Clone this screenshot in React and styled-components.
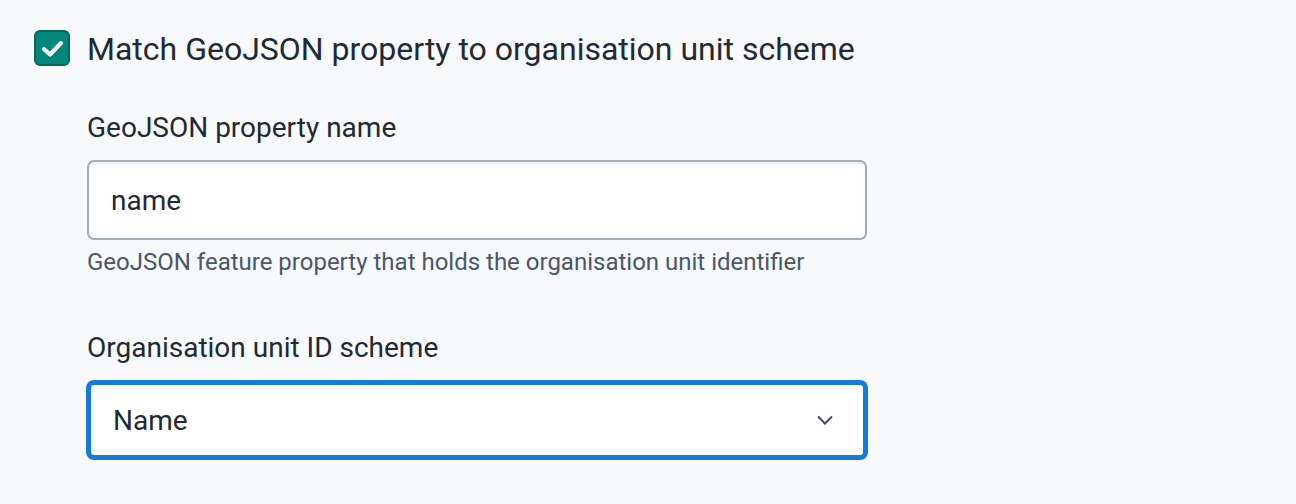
import React from "react";
import styled, { createGlobalStyle } from "styled-components";

const Global = createGlobalStyle`
  html, body {
    margin: 0;
    padding: 0;
    background: #f8f9fb;
  }
  body {
    font-family: Roboto, "Liberation Sans", Arial, sans-serif;
    color: #212934;
  }
`;

const Page = styled.div`
  padding: 30px 0 0 34px;
  width: 1296px;
  height: 504px;
  box-sizing: border-box;
`;

const CheckRow = styled.label`
  display: flex;
  align-items: center;
  gap: 17px;
  height: 36px;
`;

const Box = styled.span`
  width: 36px;
  height: 36px;
  box-sizing: border-box;
  border-radius: 6px;
  border: 2px solid #00695c;
  background: #00897b;
  display: flex;
  align-items: center;
  justify-content: center;
  flex: none;
`;

const CheckText = styled.span`
  font-size: 32px;
  line-height: 38px;
  color: #212934;
  padding-top: 1px;
`;

const Fields = styled.div`
  margin-left: 53px;
  display: flex;
  flex-direction: column;
`;

const Field = styled.div`
  display: flex;
  flex-direction: column;
  margin-top: ${(p) => p.$top}px;
`;

const Label = styled.div`
  font-size: 28px;
  line-height: 36px;
  color: #212934;
  margin-bottom: 14px;
`;

const Input = styled.div`
  width: 780px;
  height: 80px;
  box-sizing: border-box;
  border: 2px solid #a0adba;
  border-radius: 7px;
  background: #ffffff;
  box-shadow: inset 0 2px 2px rgba(48, 54, 60, 0.08);
  display: flex;
  align-items: center;
  padding: 0 22px;
  font-size: 28px;
  color: #212934;
`;

const Help = styled.div`
  font-size: 24px;
  line-height: 30px;
  color: #4a5768;
  margin-top: 7px;
`;

const Select = styled.div`
  width: 780px;
  height: 78px;
  box-sizing: border-box;
  border: 4px solid #147cd7;
  box-shadow: 0 0 0 1px #147cd7;
  border-radius: 7px;
  background: #ffffff;
  display: flex;
  align-items: center;
  justify-content: space-between;
  padding: 0 30px 0 22px;
  font-size: 28px;
  color: #212934;
  margin-top: 1px;
`;

function Chevron() {
  return (
    <svg width="16" height="10" viewBox="0 0 16 10">
      <polyline
        points="1,1.5 8,8.5 15,1.5"
        fill="none"
        stroke="#404b5a"
        strokeWidth="2"
      />
    </svg>
  );
}

export default function App() {
  return (
    <>
      <Global />
      <Page>
        <CheckRow>
          <Box>
            <svg width="32" height="32" viewBox="0 0 32 32">
              <polyline
                points="8,17 14,22.5 25,11"
                fill="none"
                stroke="#ffffff"
                strokeWidth="4"
                strokeLinecap="round"
                strokeLinejoin="round"
              />
            </svg>
          </Box>
          <CheckText>Match GeoJSON property to organisation unit scheme</CheckText>
        </CheckRow>
        <Fields>
          <Field $top={44}>
            <Label>GeoJSON property name</Label>
            <Input>name</Input>
            <Help>GeoJSON feature property that holds the organisation unit identifier</Help>
          </Field>
          <Field $top={53}>
            <Label>Organisation unit ID scheme</Label>
            <Select>
              <span>Name</span>
              <Chevron />
            </Select>
          </Field>
        </Fields>
      </Page>
    </>
  );
}
